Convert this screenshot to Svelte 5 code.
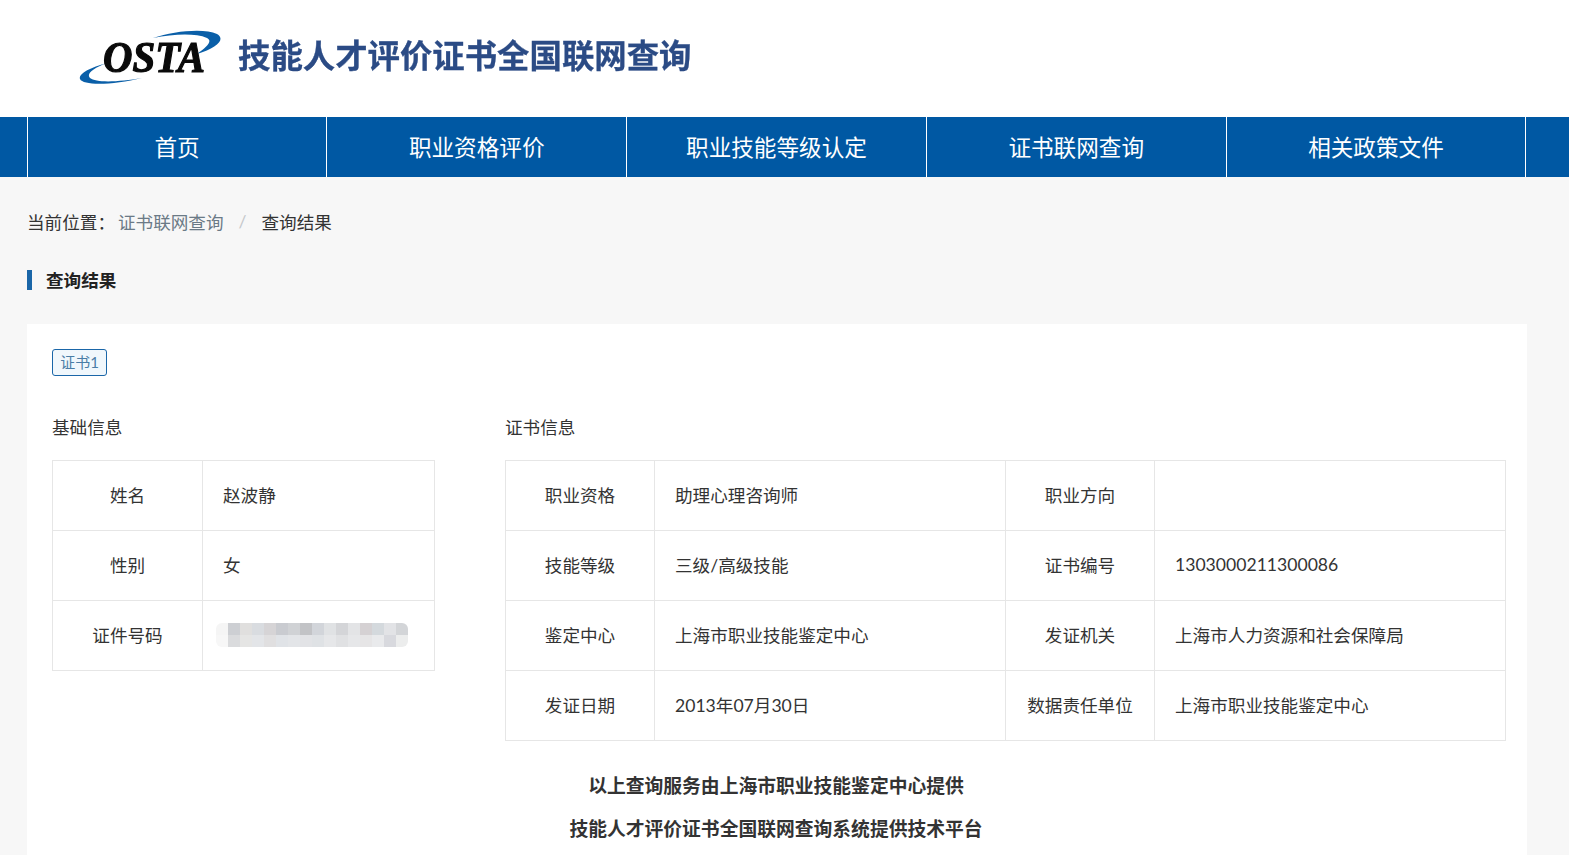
<script>
  const nav = ['首页', '职业资格评价', '职业技能等级认定', '证书联网查询', '相关政策文件'];

  const basic = [
    ['姓名', '赵波静'],
    ['性别', '女'],
    ['证件号码', null]
  ];

  const cert = [
    ['职业资格', '助理心理咨询师', '职业方向', ''],
    ['技能等级', '三级/高级技能', '证书编号', '1303000211300086'],
    ['鉴定中心', '上海市职业技能鉴定中心', '发证机关', '上海市人力资源和社会保障局'],
    ['发证日期', '2013年07月30日', '数据责任单位', '上海市职业技能鉴定中心']
  ];

  // mosaic over the id number
  const mosaic = [
    '#f5f5f5', '#cdcfd3', '#e0dfde', '#d9dce0', '#d6d4d6', '#c9cbd0', '#d0d2d5', '#c2c3c6',
    '#d2d5da', '#e0e2e4', '#d4d5d8', '#e3e4e6', '#d5d1d3', '#d4d9dd', '#e2e3e6', '#d3d5d8',
    '#f7f7f7', '#dadbdd', '#e5e5e4', '#e3e5e8', '#e0dfe0', '#e0e3e7', '#e3e5e8', '#e2e3e6',
    '#dfe2e5', '#e6e7e9', '#e0e1e3', '#e6e7e9', '#e6e5e6', '#e9eaec', '#d8d9de', '#eceded'
  ];
</script>

<header>
  <svg class="logo" viewBox="0 0 144 54" width="144" height="54" aria-hidden="true">
    <path d="M74 8 C95 1 125 -2 138 4 C147 9 138 18 118 24 C128 17 134 11 128 8 C116 3 95 4 74 8 Z" fill="#0a5fa8" />
    <path d="M28 33 C10 38 -1 44 1 49 C4 56 35 55 63 48 C40 52 17 53 11 48 C7 44 14 38 28 33 Z" fill="#0a5fa8" />
    <text x="24" y="42" class="osta" textLength="102" lengthAdjust="spacingAndGlyphs">OSTA</text>
  </svg>
  <div class="brand">技能人才评价证书全国联网查询</div>
</header>

<nav>
  <ul>
    {#each nav as item}
      <li>{item}</li>
    {/each}
  </ul>
</nav>

<main>
  <div class="crumbs">
    <span>当前位置：</span>
    <span class="link">证书联网查询</span>
    <span class="sep">/</span>
    <span>查询结果</span>
  </div>

  <h2>查询结果</h2>

  <section class="card">
    <span class="tag">证书1</span>

    <div class="tables">
      <div class="basic">
        <h3>基础信息</h3>
        <table>
          <colgroup>
            <col style="width: 150px" />
            <col />
          </colgroup>
          <tbody>
            {#each basic as row}
              <tr>
                <th>{row[0]}</th>
                <td>
                  {#if row[1]}
                    {row[1]}
                  {:else}
                    <div class="mosaic">
                      {#each mosaic as color}
                        <i style="background: {color}"></i>
                      {/each}
                    </div>
                  {/if}
                </td>
              </tr>
            {/each}
          </tbody>
        </table>
      </div>

      <div class="cert">
        <h3>证书信息</h3>
        <table>
          <colgroup>
            <col style="width: 149px" />
            <col style="width: 351px" />
            <col style="width: 149px" />
            <col style="width: 351px" />
          </colgroup>
          <tbody>
            {#each cert as row}
              <tr>
                <th>{row[0]}</th>
                <td>{row[1]}</td>
                <th>{row[2]}</th>
                <td>{row[3]}</td>
              </tr>
            {/each}
          </tbody>
        </table>
      </div>
    </div>

    <div class="notes">
      <p>以上查询服务由上海市职业技能鉴定中心提供</p>
      <p>技能人才评价证书全国联网查询系统提供技术平台</p>
    </div>
  </section>
</main>

<style>
  :global(body) {
    background: #f7f7f7;
    font-family: Lato, "Noto Sans CJK SC", "Liberation Sans", sans-serif;
    color: #333;
    overflow: hidden;
  }

  header {
    height: 117px;
    background: #fff;
    display: flex;
    align-items: center;
    padding-left: 79px;
    gap: 15px;
  }

  .logo {
    margin-top: -4px;
    flex: none;
    overflow: visible;
    filter: blur(0.4px);
  }

  .osta {
    font-family: "Liberation Serif", serif;
    font-style: italic;
    font-weight: 700;
    font-size: 44px;
    fill: #0a0a0a;
    stroke: #0a0a0a;
    stroke-width: 1.2px;
  }

  .brand {
    font-size: 32.4px;
    font-weight: 700;
    line-height: 1;
    color: #2b4b85;
    margin-top: -4px;
    -webkit-text-stroke: 0.3px #2b4b85;
    filter: blur(0.4px);
  }

  nav {
    height: 60px;
    background: #0058a3;
    padding-left: 26.6px;
  }

  nav ul {
    display: flex;
    width: 1499.75px;
    height: 60px;
    margin: 0;
    padding: 0;
    list-style: none;
    border-right: 1px solid #fff;
    box-sizing: border-box;
  }

  nav li {
    flex: 1;
    border-left: 1px solid #fff;
    padding-top: 2px;
    color: #fff;
    font-size: 22.6px;
    line-height: 58px;
    text-align: center;
  }

  main {
    width: 1500px;
    margin-left: 27px;
  }

  .crumbs {
    height: 28px;
    margin-top: 30px;
    display: flex;
    align-items: center;
    font-size: 17.6px;
    color: #333;
  }

  .crumbs .link {
    color: #6b7a86;
    margin-left: 3px;
  }

  .crumbs .sep {
    color: #c5c8cb;
    margin: 0 15px;
  }

  h2 {
    margin: 35px 0 0;
    height: 20px;
    padding-left: 14px;
    border-left: 5px solid #1a66a8;
    font-size: 17.6px;
    line-height: 22px;
    font-weight: 700;
    color: #222;
  }

  .card {
    margin-top: 34px;
    padding: 25px 20px 40px 25px;
    background: #fff;
  }

  .tag {
    display: inline-block;
    box-sizing: border-box;
    width: 55px;
    height: 27px;
    border: 1px solid #1a66a8;
    border-radius: 3px;
    background: #f0f7fc;
    color: #4a7da6;
    font-size: 15px;
    line-height: 25px;
    text-align: center;
    vertical-align: top;
  }

  .tables {
    display: flex;
    align-items: flex-start;
    gap: 70px;
    margin-top: 38px;
  }

  .basic {
    width: 383px;
  }

  .cert {
    width: 1000px;
  }

  h3 {
    margin: 0 0 20px;
    height: 26px;
    font-size: 17.6px;
    line-height: 28px;
    font-weight: 400;
    color: #333;
  }

  table {
    width: 100%;
    table-layout: fixed;
    border-collapse: collapse;
    border: 1px solid #e6e6e6;
  }

  tr {
    height: 70px;
  }

  th,
  td {
    box-sizing: border-box;
    border: 1px solid #e6e6e6;
    padding: 0 20px 2px;
    font-size: 17.6px;
    font-weight: 400;
    color: #333;
  }

  th {
    padding: 0 0 2px;
    text-align: center;
  }

  td {
    text-align: left;
  }

  .mosaic {
    display: grid;
    grid-template-columns: repeat(16, 12px);
    grid-auto-rows: 12px;
    width: 192px;
    margin-left: -7px;
    border-radius: 6px;
    overflow: hidden;
  }

  .mosaic i {
    display: block;
  }

  .notes {
    margin-top: 23px;
    padding-right: 7px;
    text-align: center;
  }

  .notes p {
    margin: 0;
    font-size: 18.8px;
    line-height: 43px;
    font-weight: 700;
    color: #333;
  }
</style>
